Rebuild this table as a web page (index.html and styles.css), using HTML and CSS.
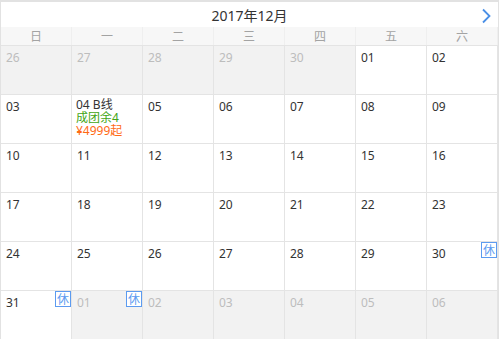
FILE: index.html
```html
<!DOCTYPE html>
<html lang="zh">
<head>
<meta charset="utf-8">
<link rel="stylesheet" href="styles.css">
</head>
<body>
<div class="cal">
  <div class="head">
    <span></span>
    <span class="title">2017年12月</span>
    <span class="next"><svg width="11" height="16" viewBox="0 0 11 16"><path d="M2 1.5 L8.5 8 L2 14.5" fill="none" stroke="#4a8fe6" stroke-width="1.8"/></svg></span>
  </div>
  <div class="week">
    <span>日</span><span>一</span><span>二</span><span>三</span><span>四</span><span>五</span><span>六</span>
  </div>
  <div class="grid">
    <div class="cell off">26</div>
    <div class="cell off">27</div>
    <div class="cell off">28</div>
    <div class="cell off">29</div>
    <div class="cell off">30</div>
    <div class="cell">01</div>
    <div class="cell">02</div>

    <div class="cell">03</div>
    <div class="cell info"><div>04 B线</div><div class="green">成团余4</div><div class="orange">¥4999起</div></div>
    <div class="cell">05</div>
    <div class="cell">06</div>
    <div class="cell">07</div>
    <div class="cell">08</div>
    <div class="cell">09</div>

    <div class="cell">10</div>
    <div class="cell">11</div>
    <div class="cell">12</div>
    <div class="cell">13</div>
    <div class="cell">14</div>
    <div class="cell">15</div>
    <div class="cell">16</div>

    <div class="cell">17</div>
    <div class="cell">18</div>
    <div class="cell">19</div>
    <div class="cell">20</div>
    <div class="cell">21</div>
    <div class="cell">22</div>
    <div class="cell">23</div>

    <div class="cell">24</div>
    <div class="cell">25</div>
    <div class="cell">26</div>
    <div class="cell">27</div>
    <div class="cell">28</div>
    <div class="cell">29</div>
    <div class="cell">30<span class="rest">休</span></div>

    <div class="cell">31<span class="rest">休</span></div>
    <div class="cell off">01<span class="rest">休</span></div>
    <div class="cell off">02</div>
    <div class="cell off">03</div>
    <div class="cell off">04</div>
    <div class="cell off">05</div>
    <div class="cell off">06</div>
  </div>
</div>
</body>
</html>
```
FILE: styles.css
```css
html, body {
  margin: 0;
  padding: 0;
  background: #fff;
}
body {
  font-family: "Noto Sans", "Noto Sans CJK SC", sans-serif;
  color: #333;
  overflow: hidden;
}
.cal {
  width: 497px;
  border-top: 2px solid #e2e2e2;
  border-left: 1px solid #e2e2e2;
  border-right: 1px solid #e2e2e2;
}
.head {
  height: 25px;
  display: grid;
  grid-template-columns: 1fr auto 1fr;
  align-items: center;
}
.title {
  font-size: 14px;
  line-height: 25px;
  color: #333;
  padding-top: 1px;
}
.next {
  justify-self: end;
  margin-right: 6px;
  display: flex;
  align-items: center;
  padding-top: 1px;
}
.week {
  height: 18px;
  background: #f7f7f7;
  display: grid;
  grid-template-columns: repeat(7, 71px);
}
.week span {
  font-family: "Noto Sans CJK SC", sans-serif;
  font-size: 12px;
  line-height: 18px;
  text-align: center;
  color: #a3a3a3;
  border-right: 1px solid #efefef;
}
.grid {
  display: grid;
  grid-template-columns: repeat(7, 71px);
  border-top: 1px solid #e4e4e4;
}
.cell {
  position: relative;
  height: 48px;
  box-sizing: content-box;
  border-right: 1px solid #e4e4e4;
  border-bottom: 1px solid #e4e4e4;
  padding: 4px 0 0 5px;
  height: 44px;
  font-size: 12px;
  line-height: 16px;
  color: #333;
  overflow: visible;
}
.cell.off {
  background: #f2f2f2;
  color: #bdbdbd;
}
.cell.info {
  padding-top: 3px;
  padding-left: 4px;
  height: 45px;
  line-height: 13px;
}
.green { color: #44a514; }
.orange { color: #ff6a14; }
.rest {
  position: absolute;
  top: 0;
  right: 0;
  width: 14px;
  height: 14px;
  border: 1px solid #5c9bf0;
  background: #fff;
  color: #5c9bf0;
  font-family: "Noto Sans CJK SC", sans-serif;
  font-size: 12px;
  line-height: 14px;
  text-align: center;
}
```
